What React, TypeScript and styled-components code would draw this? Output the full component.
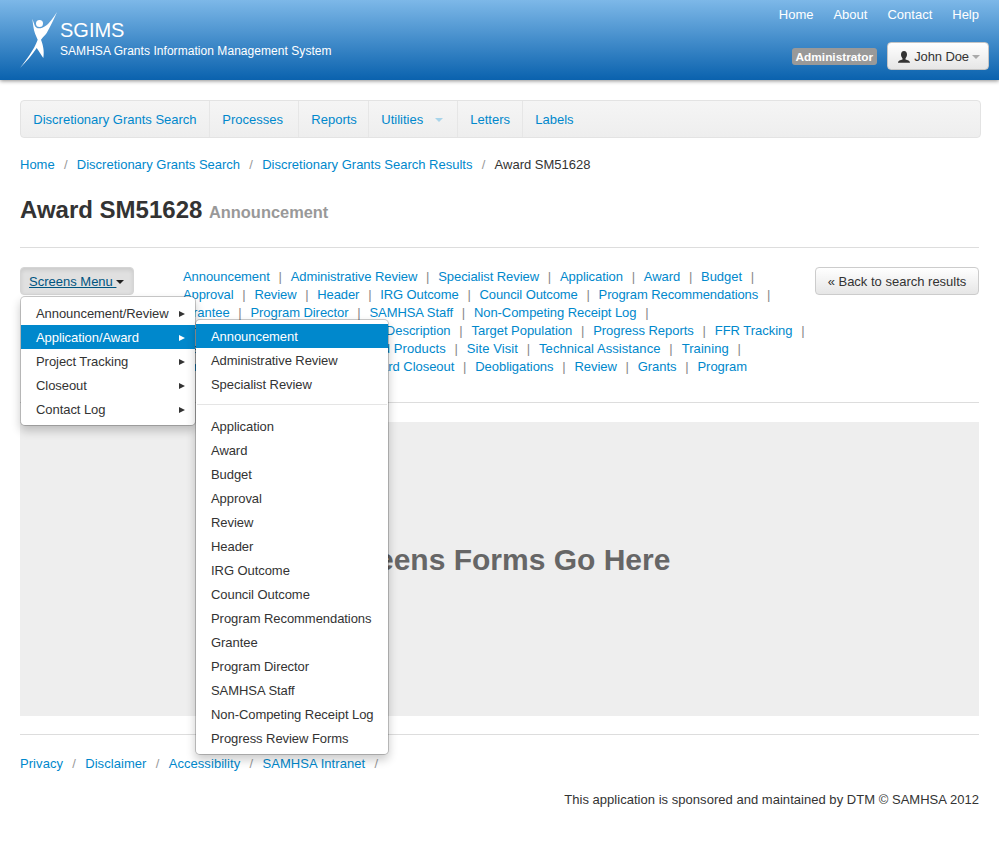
import React from 'react';
import styled, { createGlobalStyle } from 'styled-components';

const GlobalStyle = createGlobalStyle`
  html, body {
    margin: 0;
    padding: 0;
    background: #fff;
  }
  body {
    font-family: "Liberation Sans", Arial, sans-serif;
    font-size: 13px;
    line-height: 20px;
    color: #333;
  }
  a {
    color: #0088cc;
    text-decoration: none;
  }
`;

const Page = styled.div`
  position: relative;
  width: 999px;
  height: 857px;
  overflow: hidden;
`;

const Header = styled.header`
  height: 80px;
  box-sizing: border-box;
  padding: 0 10px 0 20px;
  display: flex;
  justify-content: space-between;
  background: linear-gradient(to bottom, #7db8e8, #0a62ae);
  box-shadow: 0 1px 4px rgba(0, 0, 0, 0.45);
`;

const Brand = styled.div`
  display: flex;
  align-items: flex-start;
  padding-top: 12px;
  gap: 2px;
  color: #fff;
`;

const BrandText = styled.div`
  padding-top: 6px;
`;

const BrandName = styled.div`
  font-size: 20px;
  line-height: 24px;
`;

const BrandSub = styled.div`
  font-size: 12px;
  line-height: 18px;
  letter-spacing: 0.05px;
`;

const HeaderRight = styled.div`
  display: flex;
  flex-direction: column;
  align-items: flex-end;
`;

const TopLinks = styled.nav`
  display: flex;
  gap: 20px;
  padding: 5px 10px 0 0;
  height: 42px;
  box-sizing: border-box;
  a {
    color: #fff;
  }
`;

const UserRow = styled.div`
  display: flex;
  align-items: center;
  gap: 10px;
`;

const RoleBadge = styled.span`
  background: #999;
  color: #fff;
  font-size: 11.844px;
  font-weight: bold;
  line-height: 14px;
  padding: 2px 4px 1px;
  border-radius: 3px;
`;

const UserButton = styled.div`
  height: 28px;
  box-sizing: border-box;
  padding: 1px 8px 0 9px;
  display: flex;
  align-items: center;
  gap: 3px;
  letter-spacing: -0.1px;
  border: 1px solid #c5c5c5;
  border-radius: 4px;
  background: linear-gradient(to bottom, #fff, #e6e6e6);
`;

const Caret = styled.span<{ $color: string }>`
  display: inline-block;
  width: 0;
  height: 0;
  border-left: 4px solid transparent;
  border-right: 4px solid transparent;
  border-top: 4px solid ${(p) => p.$color};
`;

const Main = styled.main`
  padding: 20px 20px 0;
`;

const NavBar = styled.nav`
  display: flex;
  height: 38px;
  box-sizing: border-box;
  width: 961px;
  border: 1px solid #e3e3e3;
  border-radius: 4px;
  background: linear-gradient(to bottom, #f5f5f5, #eeeeee);
`;

const NavItem = styled.a<{ $width?: number }>`
  display: flex;
  align-items: center;
  gap: 12px;
  box-sizing: border-box;
  padding: 1px 0 0 12.3px;
  width: ${(p) => (p.$width ? `${p.$width}px` : 'auto')};
  border-right: ${(p) => (p.$width ? '1px solid #e6e6e6' : 'none')};
`;

const Crumbs = styled.div`
  display: flex;
  align-items: center;
  height: 20px;
  margin-top: 17px;
`;

const Slash = styled.span`
  color: #999;
  padding: 0 9.25px;
`;

const Title = styled.h1`
  margin: 20px 0 0;
  font-size: 24px;
  line-height: 30px;
  color: #333;
  small {
    font-size: 16.4px;
    font-weight: bold;
    color: #999;
  }
`;

const Rule = styled.hr`
  border: 0;
  border-top: 1px solid #ddd;
  margin: 0;
  width: 959px;
`;

const TitleRule = styled(Rule)`
  margin-top: 20px;
`;

const ScreensRow = styled.section`
  display: flex;
  height: 135px;
  width: 959px;
  padding-top: 19px;
`;

const ScreensButton = styled.div`
  width: 114px;
  height: 28px;
  box-sizing: border-box;
  flex: none;
  display: flex;
  align-items: center;
  padding: 1px 0 0 8px;
  color: #005580;
  background: #e0e0e0;
  border-radius: 4px;
  border: 1px solid #d5d5d5;
  box-shadow: inset 0 2px 4px rgba(0, 0, 0, 0.1);
  u {
    text-decoration: underline;
    white-space: pre;
  }
`;

const ScreenLinks = styled.div`
  margin-left: 49px;
  padding-top: 1px;
  width: 620px;
  flex: none;
  line-height: 18px;
`;

const Line = styled.div<{ $tracking: number }>`
  white-space: nowrap;
  letter-spacing: ${(p) => p.$tracking}px;
`;

const Pipe = styled.span`
  color: #888;
  padding: 0 8.8px;
`;

const BackButton = styled.div`
  margin-left: auto;
  width: 164px;
  height: 28px;
  box-sizing: border-box;
  padding-top: 1px;
  display: flex;
  align-items: center;
  justify-content: center;
  color: #333;
  border: 1px solid #ccc;
  border-radius: 4px;
  background: linear-gradient(to bottom, #fff, #e6e6e6);
`;

const FormArea = styled.div`
  margin-top: 19px;
  width: 959px;
  height: 294px;
  box-sizing: border-box;
  padding-bottom: 18px;
  background: #eee;
  display: flex;
  align-items: center;
  justify-content: center;
  font-size: 30px;
  font-weight: bold;
  color: #666;
`;

const FooterRule = styled(Rule)`
  margin-top: 18px;
`;

const FooterLinks = styled.div`
  display: flex;
  align-items: center;
  height: 20px;
  margin-top: 19px;
  letter-spacing: 0.06px;
`;

const Sponsor = styled.div`
  width: 959px;
  margin-top: 16px;
  text-align: right;
  letter-spacing: 0.03px;
`;

const Menu = styled.ul<{ $left: number; $top: number; $width: number }>`
  position: absolute;
  left: ${(p) => p.$left}px;
  top: ${(p) => p.$top}px;
  width: ${(p) => p.$width}px;
  box-sizing: border-box;
  margin: 0;
  padding: 4px 0;
  list-style: none;
  letter-spacing: -0.06px;
  background: #fff;
  border: 1px solid rgba(0, 0, 0, 0.2);
  border-radius: 5px;
  box-shadow: 0 5px 10px rgba(0, 0, 0, 0.2);
  background-clip: padding-box;
`;

const MenuItem = styled.li<{ $active?: boolean }>`
  height: 24px;
  box-sizing: border-box;
  padding: 1px 15px 0;
  display: flex;
  align-items: center;
  justify-content: space-between;
  white-space: nowrap;
  color: ${(p) => (p.$active ? '#fff' : '#333')};
  background: ${(p) => (p.$active ? '#0088cc' : 'transparent')};
`;

const Arrow = styled.span<{ $active?: boolean }>`
  width: 0;
  height: 0;
  margin-right: -5px;
  border-top: 3px solid transparent;
  border-bottom: 3px solid transparent;
  border-left: 6px solid ${(p) => (p.$active ? '#fff' : '#333')};
`;

const MenuDivider = styled.li`
  height: 1px;
  margin: 8px 1px 9px;
  background: #e5e5e5;
`;

const Logo = () => (
  <svg width="38" height="56" viewBox="0 0 38 56" fill="#fff" aria-hidden="true">
    <circle cx="19.500" cy="11.500" r="3.500" />
    <path d="M37 0 C33 6 29 12 25 14.300 C22 16.500 16 18 14.500 13 L12.300 6.700 L13.300 14.300 C14 20 16 24 17.700 27.700 C14 38 6 48 0 56 C6 50 12 43 16.700 36 C19 39 21 43 23.300 46 C24.500 39 23 33 21 27.700 C23 25 25.500 23 26.700 21 C30 15 34 7 37 0 Z" />
  </svg>
);

const Person = () => (
  <svg width="14" height="14" viewBox="0 0 14 14" fill="#333" aria-hidden="true">
    <path d="M7 1 C9 1 10 2.600 10 4.600 C10 6.400 9.200 7.600 8.500 8.400 L8.500 9.400 C10.500 10 13 10.400 13 12.800 L1 12.800 C1 10.400 3.500 10 5.500 9.400 L5.500 8.400 C4.800 7.600 4 6.400 4 4.600 C4 2.600 5 1 7 1 Z" />
  </svg>
);

const linkRows = [
  { tracking: -0.06, items: ['Announcement', 'Administrative Review', 'Specialist Review', 'Application', 'Award', 'Budget', ''] },
  { tracking: -0.1, items: ['Approval', 'Review', 'Header', 'IRG Outcome', 'Council Outcome', 'Program Recommendations', ''] },
  { tracking: -0.06, items: ['Grantee', 'Program Director', 'SAMHSA Staff', 'Non-Competing Receipt Log', ''] },
  { tracking: -0.03, items: ['Progress Review Forms', 'Project Description', 'Target Population', 'Progress Reports', 'FFR Tracking', ''] },
  { tracking: 0.08, items: ['Data Collection', 'Publications and Products', 'Site Visit', 'Technical Assistance', 'Training', ''] },
  { tracking: -0.04, items: ['Financial Status Report Log', 'Award Closeout', 'Deobligations', 'Review', 'Grants', 'Program'] },
];

const mainMenu = ['Announcement/Review', 'Application/Award', 'Project Tracking', 'Closeout', 'Contact Log'];
const subTop = ['Announcement', 'Administrative Review', 'Specialist Review'];
const subRest = [
  'Application', 'Award', 'Budget', 'Approval', 'Review', 'Header', 'IRG Outcome', 'Council Outcome',
  'Program Recommendations', 'Grantee', 'Program Director', 'SAMHSA Staff', 'Non-Competing Receipt Log',
  'Progress Review Forms',
];

export default function App() {
  return (
    <Page>
      <GlobalStyle />
      <Header>
        <Brand>
          <Logo />
          <BrandText>
            <BrandName>SGIMS</BrandName>
            <BrandSub>SAMHSA Grants Information Management System</BrandSub>
          </BrandText>
        </Brand>
        <HeaderRight>
          <TopLinks>
            <a>Home</a>
            <a>About</a>
            <a>Contact</a>
            <a>Help</a>
          </TopLinks>
          <UserRow>
            <RoleBadge>Administrator</RoleBadge>
            <UserButton>
              <Person />
              John Doe
              <Caret $color="#aaa" />
            </UserButton>
          </UserRow>
        </HeaderRight>
      </Header>
      <Main>
        <NavBar>
          <NavItem $width={189}>Discretionary Grants Search</NavItem>
          <NavItem $width={89}>Processes</NavItem>
          <NavItem $width={70}>Reports</NavItem>
          <NavItem $width={89}>Utilities <Caret $color="#a8d4ea" /></NavItem>
          <NavItem $width={65}>Letters</NavItem>
          <NavItem>Labels</NavItem>
        </NavBar>
        <Crumbs>
          <a>Home</a><Slash>/</Slash>
          <a>Discretionary Grants Search</a><Slash>/</Slash>
          <a>Discretionary Grants Search Results</a><Slash>/</Slash>
          <span>Award SM51628</span>
        </Crumbs>
        <Title>Award SM51628 <small>Announcement</small></Title>
        <TitleRule />
        <ScreensRow>
          <ScreensButton><u>Screens Menu </u><Caret $color="#222" /></ScreensButton>
          <ScreenLinks>
            {linkRows.map((row, i) => (
              <Line key={i} $tracking={row.tracking}>
                {row.items.map((label, j) => (
                  <React.Fragment key={j}>
                    {label && <a>{label}</a>}
                    {j < row.items.length - 1 && <Pipe>|</Pipe>}
                  </React.Fragment>
                ))}
              </Line>
            ))}
          </ScreenLinks>
          <BackButton>« Back to search results</BackButton>
        </ScreensRow>
        <Rule />
        <FormArea>Screens Forms Go Here</FormArea>
        <FooterRule />
        <FooterLinks>
          <a>Privacy</a><Slash>/</Slash>
          <a>Disclaimer</a><Slash>/</Slash>
          <a>Accessibility</a><Slash>/</Slash>
          <a>SAMHSA Intranet</a><Slash>/</Slash>
        </FooterLinks>
        <Sponsor>This application is sponsored and maintained by DTM © SAMHSA 2012</Sponsor>
      </Main>
      <Menu $left={20} $top={296} $width={176}>
        {mainMenu.map((m, i) => (
          <MenuItem key={m} $active={i === 1}>
            {m}
            <Arrow $active={i === 1} />
          </MenuItem>
        ))}
      </Menu>
      <Menu $left={195} $top={319} $width={194}>
        {subTop.map((m, i) => (
          <MenuItem key={m} $active={i === 0}>{m}</MenuItem>
        ))}
        <MenuDivider />
        {subRest.map((m) => (
          <MenuItem key={m}>{m}</MenuItem>
        ))}
      </Menu>
    </Page>
  );
}
